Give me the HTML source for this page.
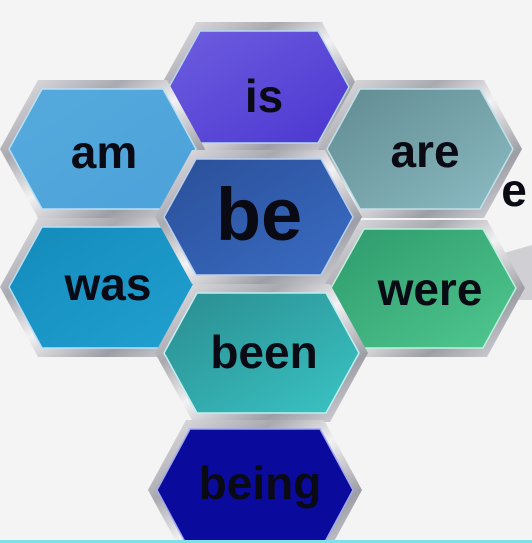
<!DOCTYPE html>
<html><head><meta charset="utf-8"><style>
html,body{margin:0;padding:0;background:#f4f4f4;}
svg{display:block}
text{font-family:"Liberation Sans",sans-serif;font-weight:bold;fill:#0a0a14;text-anchor:middle}
</style></head><body>
<svg width="532" height="543" viewBox="0 0 532 543" xmlns="http://www.w3.org/2000/svg">
<defs>
<linearGradient id="sil" x1="0" y1="0" x2="1" y2="1">
<stop offset="0" stop-color="#e8e8ec"/><stop offset="0.3" stop-color="#a9a9b0"/><stop offset="0.5" stop-color="#f2f2f4"/><stop offset="0.75" stop-color="#9d9da5"/><stop offset="1" stop-color="#e0e0e4"/></linearGradient>
<linearGradient id="gis" x1="0" y1="0" x2="1" y2="1"><stop offset="0" stop-color="#6d5ee0"/><stop offset="1" stop-color="#4c36d0"/></linearGradient>
<linearGradient id="gam" x1="0" y1="0" x2="1" y2="1"><stop offset="0" stop-color="#55a9dc"/><stop offset="1" stop-color="#4ca3da"/></linearGradient>
<linearGradient id="gare" x1="0" y1="0" x2="1" y2="1"><stop offset="0" stop-color="#5f8a90"/><stop offset="1" stop-color="#8dbcc4"/></linearGradient>
<linearGradient id="gbe" x1="0" y1="0" x2="1" y2="1"><stop offset="0" stop-color="#2a4f98"/><stop offset="1" stop-color="#3a6cc4"/></linearGradient>
<linearGradient id="gwas" x1="0" y1="0" x2="1" y2="1"><stop offset="0" stop-color="#138bbb"/><stop offset="1" stop-color="#21a0d0"/></linearGradient>
<linearGradient id="gwere" x1="0" y1="0" x2="1" y2="1"><stop offset="0" stop-color="#2e9a6c"/><stop offset="1" stop-color="#50c890"/></linearGradient>
<linearGradient id="gbeen" x1="0" y1="0" x2="1" y2="1"><stop offset="0" stop-color="#2a8c90"/><stop offset="1" stop-color="#3ac4c4"/></linearGradient>
</defs>
<polygon points="497,255 532,245 532,300 505,300" fill="#d0d0d4"/>
<text x="514" y="206" style="font-size:46px">e</text>

<polygon points="196,22 322,22 358,87 322,152 196,152 160,87" fill="url(#sil)"/>
<polygon points="200,31 318,31 349,87 318,143 200,143 169,87" fill="url(#gis)" stroke="#b8d8f0" stroke-width="1.5"/>
<text x="264" y="112" style="font-size:46px">is</text>

<polygon points="38,80 167,80 205,149 167,218 38,218 0,149" fill="url(#sil)"/>
<polygon points="42,89 163,89 196,149 163,209 42,209 9,149" fill="url(#gam)" stroke="#b8e0f4" stroke-width="1.5"/>
<text x="104" y="168" style="font-size:46px">am</text>

<polygon points="356,80 484,80 522,149 484,218 356,218 318,149" fill="url(#sil)"/>
<polygon points="360,89 480,89 513,149 480,209 360,209 327,149" fill="url(#gare)" stroke="#c0e0e8" stroke-width="1.5"/>
<text x="425" y="167" style="font-size:46px">are</text>

<polygon points="38,218 167,218 205,287 167,357 38,357 0,287" fill="url(#sil)"/>
<polygon points="42,227 163,227 196,287 163,348 42,348 9,287" fill="url(#gwas)" stroke="#b8e0f4" stroke-width="1.5"/>
<text x="108" y="300" style="font-size:46px">was</text>

<polygon points="360,220 487,220 525,288 487,357 360,357 322,288" fill="url(#sil)"/>
<polygon points="364,229 483,229 516,288 483,348 364,348 331,288" fill="url(#gwere)" stroke="#c0f0dc" stroke-width="1.5"/>
<text x="430" y="305" style="font-size:46px">were</text>

<polygon points="192,150 325,150 362,217 325,284 192,284 155,217" fill="url(#sil)"/>
<polygon points="196,159 321,159 353,217 321,275 196,275 164,217" fill="url(#gbe)" stroke="#b8d0f0" stroke-width="1.5"/>
<text x="259" y="240" style="font-size:74px">be</text>

<polygon points="193,284 330,284 368,353 330,422 193,422 155,353" fill="url(#sil)"/>
<polygon points="197,293 326,293 359,353 326,413 197,413 164,353" fill="url(#gbeen)" stroke="#c0f0f0" stroke-width="1.5"/>
<text x="264" y="368" style="font-size:46px">been</text>

<polygon points="186,420 324,420 362,490 324,560 186,560 148,490" fill="url(#sil)"/>
<polygon points="190,429 320,429 353,490 320,551 190,551 157,490" fill="#0a0a9c" stroke="#a0a8f0" stroke-width="1.5"/>
<text x="260" y="499" style="font-size:46px">being</text>

<rect x="0" y="540" width="532" height="3" fill="#7fe0e8"/>
</svg>
</body></html>
